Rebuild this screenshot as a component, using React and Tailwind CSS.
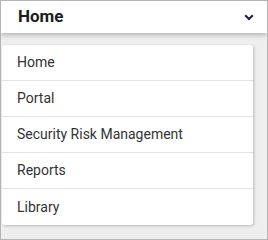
import React from "react"

const items = ["Home", "Portal", "Security Risk Management", "Reports", "Library"]

const App = () => {
  return (
    <div
      className="w-[268px] h-[240px] bg-[#eeeeee] border border-[#b5b5b5] overflow-hidden"
      style={{ fontFamily: "Roboto, 'Liberation Sans', sans-serif" }}
    >
      <div className="h-8 bg-white flex items-center justify-between pl-[17px] pr-[13px] shadow-[0_2px_5px_rgba(0,0,0,0.25)] relative">
        <span className="text-[17px] font-bold text-[#1c1c1c]">Home</span>
        <svg width="10" height="7" viewBox="0 0 10 7" fill="none">
          <path d="M1.2 1.2 L5 5 L8.8 1.2" stroke="#1d2233" strokeWidth="2" />
        </svg>
      </div>

      <div className="mt-3 ml-px w-[251px] bg-white rounded-[3px] shadow-[1px_1px_3px_rgba(0,0,0,0.22)]">
        {items.map((item, i) => (
          <div
            key={item}
            className={`h-9 flex items-center px-[15px] text-[14px] text-[#333333] ${
              i < items.length - 1 ? "border-b border-[#e2e2e2]" : ""
            }`}
          >
            {item}
          </div>
        ))}
      </div>
    </div>
  )
}

export default App
